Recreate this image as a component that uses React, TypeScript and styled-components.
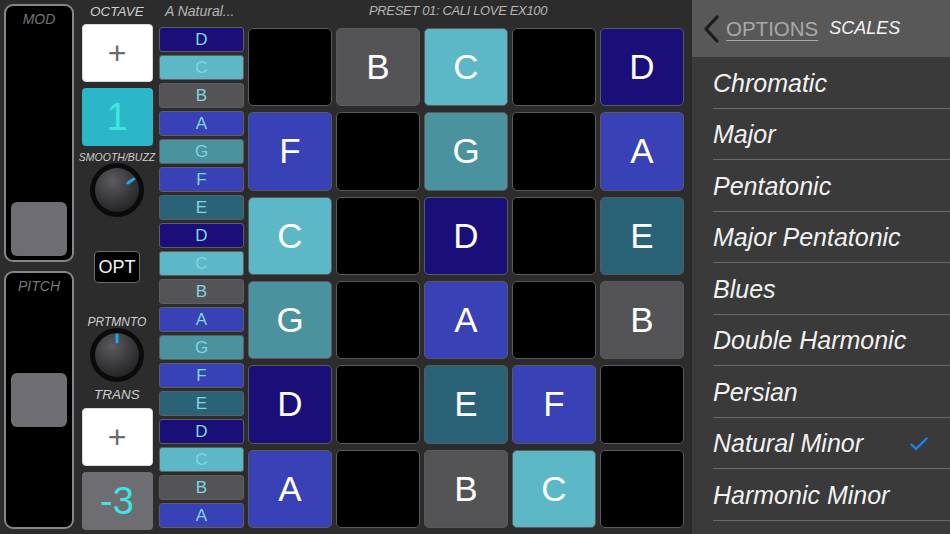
import React from 'react';
import styled, { createGlobalStyle } from 'styled-components';

const GlobalStyle = createGlobalStyle`
  html, body {
    margin: 0;
    padding: 0;
    background: #2c2c2c;
  }
  body {
    font-family: "Liberation Sans", Arial, sans-serif;
  }
`;

const NOTE_COLORS: Record<string, string> = {
  D: '#1a0f78',
  C: '#5cb7c7',
  B: '#545456',
  A: '#3841b5',
  G: '#4a929d',
  F: '#3841b5',
  E: '#2a6378',
};

const NOTE_STRIP = ['D', 'C', 'B', 'A', 'G', 'F', 'E', 'D', 'C', 'B', 'A', 'G', 'F', 'E', 'D', 'C', 'B', 'A'];

const PADS = [
  ['', 'B', 'C', '', 'D'],
  ['F', '', 'G', '', 'A'],
  ['C', '', 'D', '', 'E'],
  ['G', '', 'A', '', 'B'],
  ['D', '', 'E', 'F', ''],
  ['A', '', 'B', 'C', ''],
];

const SCALES = [
  'Chromatic',
  'Major',
  'Pentatonic',
  'Major Pentatonic',
  'Blues',
  'Double Harmonic',
  'Persian',
  'Natural Minor',
  'Harmonic Minor',
];

const Screen = styled.div`
  display: flex;
  width: 950px;
  height: 534px;
  overflow: hidden;
  background: #2c2c2c;
`;

/* ---------- sliders ---------- */

const SliderColumn = styled.div`
  display: flex;
  flex-direction: column;
  gap: 9px;
  width: 70px;
  padding: 4px 0 5px 4px;
  box-sizing: content-box;
`;

const SliderTrack = styled.div`
  position: relative;
  flex: 1;
  border: 2px solid #86868a;
  border-radius: 9px;
  background: #000;
`;

const SliderLabel = styled.div`
  margin-top: 5px;
  text-align: center;
  font-size: 14px;
  font-style: italic;
  color: #75757a;
`;

const SliderThumb = styled.div<{ $top?: number; $bottom?: number }>`
  position: absolute;
  left: 5px;
  right: 5px;
  height: 54px;
  border-radius: 6px;
  background: #6d6d72;
  ${(p) => (p.$top !== undefined ? `top: ${p.$top}px;` : `bottom: ${p.$bottom}px;`)}
`;

const Slider = ({ label, top, bottom }: { label: string; top?: number; bottom?: number }) => (
  <SliderTrack>
    <SliderLabel>{label}</SliderLabel>
    <SliderThumb $top={top} $bottom={bottom} />
  </SliderTrack>
);

/* ---------- control column ---------- */

const ControlColumn = styled.div`
  display: flex;
  flex-direction: column;
  align-items: center;
  width: 72px;
  margin-left: 7px;
`;

const ControlLabel = styled.div<{ $size: number; $h: number; $mt?: number }>`
  height: ${(p) => p.$h}px;
  line-height: ${(p) => p.$h}px;
  margin-top: ${(p) => p.$mt ?? 0}px;
  font-size: ${(p) => p.$size}px;
  font-style: italic;
  color: #cfcfcf;
  white-space: nowrap;
`;

const PlusButton = styled.div<{ $mt?: number }>`
  display: flex;
  align-items: center;
  justify-content: center;
  width: 71px;
  height: 58px;
  margin-top: ${(p) => p.$mt ?? 0}px;
  border-radius: 4px;
  background: #fff;
  color: #6a6a6a;
  font-size: 32px;
  box-sizing: border-box;
  border: 1px solid #d8d8d8;
`;

const ValueBox = styled.div<{ $bg: string }>`
  display: flex;
  align-items: center;
  justify-content: center;
  width: 71px;
  height: 58px;
  margin-top: 6px;
  border-radius: 4px;
  background: ${(p) => p.$bg};
  color: #3ee6e2;
  font-size: 38px;
`;

const KnobWrap = styled.div`
  width: 54px;
  height: 54px;
`;

const OptButton = styled.div`
  display: flex;
  align-items: center;
  justify-content: center;
  width: 46px;
  height: 32px;
  margin-top: 34px;
  box-sizing: border-box;
  border: 1px solid #6e6e6e;
  border-radius: 4px;
  background: #000;
  color: #f2f2f2;
  font-size: 18px;
`;

const Knob = ({ angle, id }: { angle: number; id: string }) => {
  const rad = ((angle - 90) * Math.PI) / 180;
  const x1 = 27 + Math.cos(rad) * 13;
  const y1 = 27 + Math.sin(rad) * 13;
  const x2 = 27 + Math.cos(rad) * 20;
  const y2 = 27 + Math.sin(rad) * 20;
  return (
    <KnobWrap>
      <svg width="54" height="54" viewBox="0 0 54 54">
        <defs>
          <radialGradient id={id} cx="40%" cy="30%" r="75%">
            <stop offset="0%" stopColor="#5c5c60" />
            <stop offset="60%" stopColor="#38383b" />
            <stop offset="100%" stopColor="#222224" />
          </radialGradient>
        </defs>
        <circle cx="27" cy="27" r="27" fill="#0b0b0b" />
        <circle cx="27" cy="27" r="22" fill={`url(#${id})`} />
        <line x1={x1} y1={y1} x2={x2} y2={y2} stroke="#1aa6f4" strokeWidth="3" strokeLinecap="round" />
      </svg>
    </KnobWrap>
  );
};

/* ---------- notes + pads ---------- */

const PlayArea = styled.div`
  display: flex;
  flex-direction: column;
  width: 525px;
  margin-left: 6px;
`;

const PlayHeader = styled.div`
  display: flex;
  height: 27px;
  align-items: flex-start;
  font-style: italic;
  color: #b4b4b4;
`;

const ScaleName = styled.div`
  width: 210px;
  padding-left: 6px;
  box-sizing: border-box;
  font-size: 14px;
  line-height: 22px;
`;

const PresetName = styled.div`
  font-size: 13px;
  line-height: 22px;
  letter-spacing: -0.35px;
`;

const PlayBody = styled.div`
  display: flex;
  gap: 4px;
`;

const NoteStrip = styled.div`
  display: flex;
  flex-direction: column;
  gap: 3px;
  width: 85px;
`;

const NoteKey = styled.div<{ $bg: string }>`
  display: flex;
  align-items: center;
  justify-content: center;
  height: 25px;
  box-sizing: border-box;
  border: 1px solid #5e5e62;
  border-radius: 3px;
  background: ${(p) => p.$bg};
  color: #7dd6e2;
  font-size: 17px;
`;

const PadGrid = styled.div`
  display: grid;
  grid-template-columns: repeat(5, 84px);
  grid-template-rows: repeat(6, 1fr);
  column-gap: 4px;
  row-gap: 6px;
  height: 500px;
  margin-top: 1px;
`;

const Pad = styled.div<{ $bg: string }>`
  display: flex;
  align-items: center;
  justify-content: center;
  box-sizing: border-box;
  border: 1px solid #5a5a5e;
  border-radius: 5px;
  background: ${(p) => p.$bg};
  color: #fff;
  font-size: 35px;
`;

/* ---------- options panel ---------- */

const OptionsPanel = styled.div`
  display: flex;
  flex-direction: column;
  width: 258px;
  margin-left: auto;
  background: #3a3a3a;
`;

const PanelHeader = styled.div`
  display: flex;
  align-items: center;
  height: 57px;
  padding-left: 11px;
  background: #585858;
`;

const BackLink = styled.span`
  margin-left: 7px;
  font-size: 20.5px;
  color: #a9a9a9;
  text-decoration: underline;
  text-decoration-thickness: 1px;
  text-underline-offset: 4px;
`;

const PanelTitle = styled.span`
  margin-left: 11px;
  font-size: 18px;
  font-style: italic;
  color: #f4f4f4;
`;

const ScaleRow = styled.div`
  display: flex;
  align-items: center;
  justify-content: space-between;
  height: 51.5px;
  margin-left: 21px;
  padding-right: 22px;
  padding-top: 2px;
  box-sizing: border-box;
  border-bottom: 1px solid #6a6a6a;
  font-size: 25px;
  font-style: italic;
  color: #f2f2f2;
`;

const App = () => (
  <>
    <GlobalStyle />
    <Screen>
      <SliderColumn>
        <Slider label="MOD" bottom={4} />
        <Slider label="PITCH" top={100} />
      </SliderColumn>

      <ControlColumn>
        <ControlLabel $size={13.5} $h={24}>OCTAVE</ControlLabel>
        <PlusButton>+</PlusButton>
        <ValueBox $bg="#2bb7c8">1</ValueBox>
        <ControlLabel $size={10.5} $h={11} $mt={6}>SMOOTH/BUZZ</ControlLabel>
        <Knob id="k1" angle={57} />
        <OptButton>OPT</OptButton>
        <ControlLabel $size={12} $h={11} $mt={34}>PRTMNTO</ControlLabel>
        <Knob id="k2" angle={0} />
        <ControlLabel $size={13.5} $h={18} $mt={4}>TRANS</ControlLabel>
        <PlusButton $mt={4}>+</PlusButton>
        <ValueBox $bg="#6d6d72">-3</ValueBox>
      </ControlColumn>

      <PlayArea>
        <PlayHeader>
          <ScaleName>A Natural...</ScaleName>
          <PresetName>PRESET 01: CALI LOVE EX100</PresetName>
        </PlayHeader>
        <PlayBody>
          <NoteStrip>
            {NOTE_STRIP.map((n, i) => (
              <NoteKey key={i} $bg={NOTE_COLORS[n]}>{n}</NoteKey>
            ))}
          </NoteStrip>
          <PadGrid>
            {PADS.flat().map((n, i) => (
              <Pad key={i} $bg={n ? NOTE_COLORS[n] : '#000'}>{n}</Pad>
            ))}
          </PadGrid>
        </PlayBody>
      </PlayArea>

      <OptionsPanel>
        <PanelHeader>
          <svg width="16" height="28" viewBox="0 0 16 28">
            <polyline points="14,2 3,14 14,26" fill="none" stroke="#1c1c1c" strokeWidth="3.2" strokeLinecap="round" strokeLinejoin="round" />
          </svg>
          <BackLink>OPTIONS</BackLink>
          <PanelTitle>SCALES</PanelTitle>
        </PanelHeader>
        {SCALES.map((s) => (
          <ScaleRow key={s}>
            {s}
            {s === 'Natural Minor' && (
              <svg width="18" height="14" viewBox="0 0 18 14">
                <polyline points="1.5,7.5 6,12 16.5,1.5" fill="none" stroke="#1a82f0" strokeWidth="2.4" strokeLinecap="round" strokeLinejoin="round" />
              </svg>
            )}
          </ScaleRow>
        ))}
      </OptionsPanel>
    </Screen>
  </>
);

export default App;
